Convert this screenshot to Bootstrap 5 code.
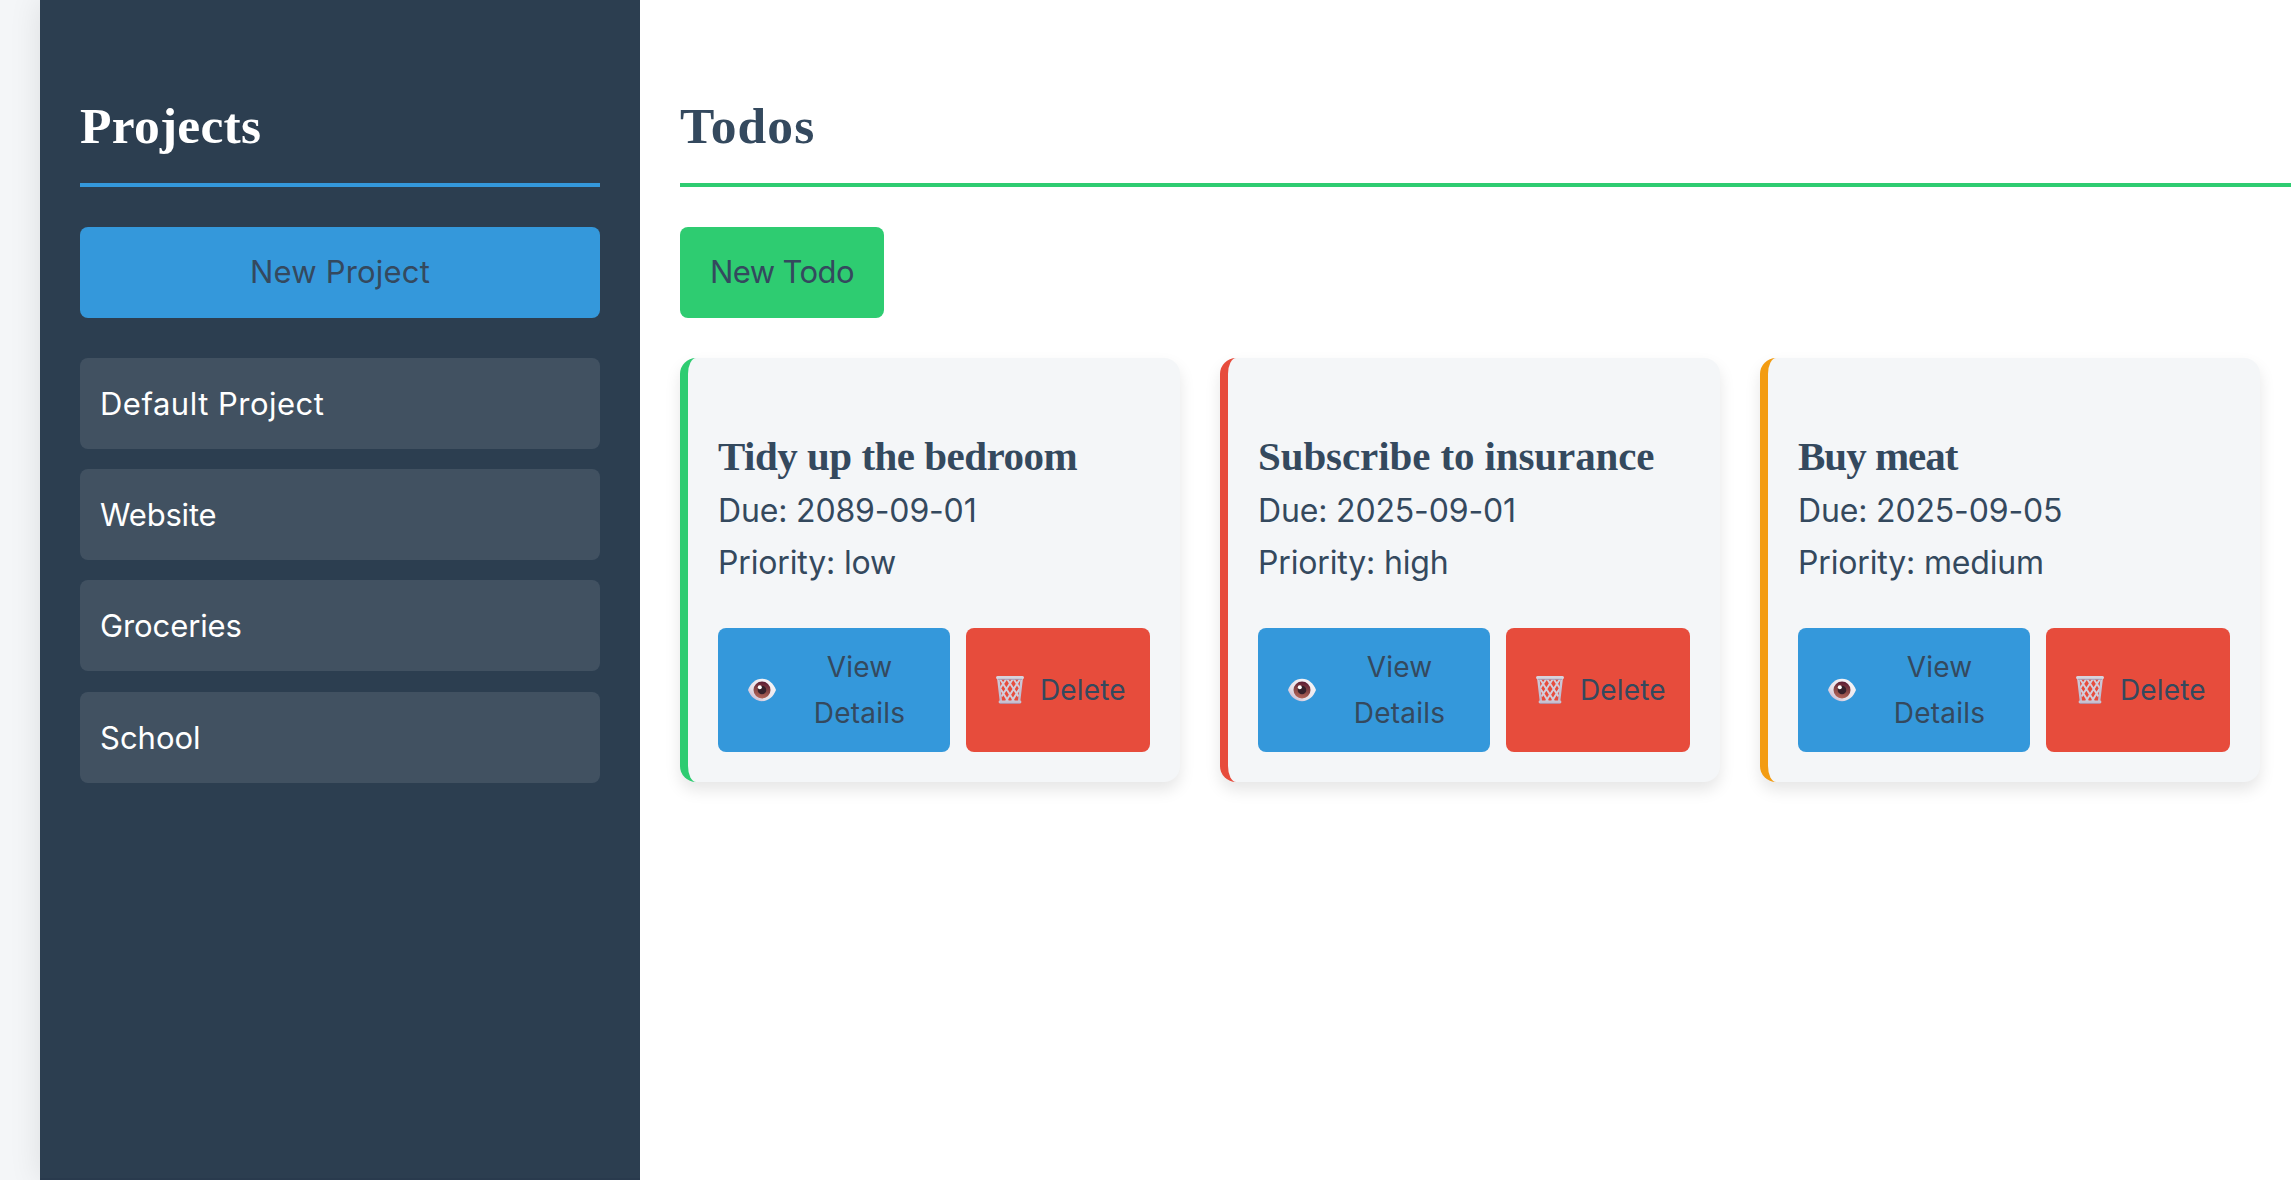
<!DOCTYPE html>
<html lang="en">
<head>
<meta charset="utf-8">
<meta name="viewport" content="width=device-width, initial-scale=1">
<title>Todos</title>
<link href="https://cdn.jsdelivr.net/npm/bootstrap@5.3.0/dist/css/bootstrap.min.css" rel="stylesheet">
<style>
  body { background: #f4f6f8; color: #34495e; font: 32px/51.2px Inter, "Open Sans", sans-serif; overflow: hidden; }
  .shell { margin-left: 40px; height: 1180px; background: #fff; box-shadow: 0 0 30px rgba(0,0,0,.1); }
  .sidebar { width: 600px; padding: 86px 40px 0; background: #2c3e50; border-bottom: 2px solid #293a4d; }
  .main-pane { padding: 86px 0 0 40px; min-width: 0; }
  .pane-title { font: bold 51.5px/79px "Liberation Serif", serif; padding-bottom: 18px; margin-bottom: 40px; border-bottom: 4px solid; }
  .sidebar .pane-title { color: #fff; border-color: #3498db; letter-spacing: .25px; }
  .main-pane .pane-title { border-color: #2ecc71; letter-spacing: 1.1px; }
  .flat-btn { font-size: 31px; line-height: 51px; padding: 19px 30px 21px; border: 0; border-radius: 8px; color: #34495e; margin-bottom: 40px; }
  .blue-btn { background: #3498db; }
  .green-btn { background: #2ecc71; width: 204px; letter-spacing: -.6px; white-space: nowrap; }
  .red-btn { background: #e74c3c; }
  .new-project { letter-spacing: .2px; }
  .project-item { font-size: 31px; line-height: 51px; padding: 20px; border-radius: 8px; background: rgba(255,255,255,.1); color: #fff; }
  .project-list { gap: 20.2px; }
  .sp-wide { letter-spacing: .5px; }
  .sp-tight { letter-spacing: -.2px; }
  .sp-flat { letter-spacing: -.1px; }
  .todo-grid { gap: 40px; }
  .todo-card { width: 500px; height: 424px; flex: none; padding: 30px; background: #f4f6f8; border-left: 8px solid; border-radius: 16px; box-shadow: 0 8px 16px rgba(0,0,0,.1); }
  .todo-card p { letter-spacing: -.16px; }
  .prio-low { border-color: #2ecc71; }
  .prio-high { border-color: #e74c3c; }
  .prio-medium { border-color: #f39c12; }
  .todo-title { font: bold 41px/41px "Liberation Serif", serif; margin: 47.7px 0 8.7px; white-space: nowrap; letter-spacing: -.1px; }
  .prio-low .todo-title { letter-spacing: -.5px; }
  .prio-medium .todo-title { letter-spacing: -1px; }
  .todo-actions { gap: 16px; margin-top: 40px; }
  .act-btn { height: 124px; font-size: 28px; line-height: 46px; border: 0; border-radius: 8px; color: #34495e; padding: 16px 29px; }
  .view-btn { width: 232px; }
  .view-btn span { margin-left: 21px; letter-spacing: .2px; }
  .del-btn { width: 184px; padding-right: 0; gap: 15px; }
  .del-btn span { letter-spacing: .15px; }
  .act-btn svg { width: 30px; height: 30px; flex: none; }
</style>
</head>
<body>
<svg class="position-absolute" width="0" height="0" xmlns="http://www.w3.org/2000/svg">
  <defs>
    <linearGradient id="gWhite" x1="0" y1="1" x2="1" y2="0"><stop offset="0" stop-color="#b9a2c8"/><stop offset=".35" stop-color="#e6e0e8"/><stop offset="1" stop-color="#fbfbfb"/></linearGradient>
    <linearGradient id="gIris" x1=".6" y1="0" x2=".4" y2="1"><stop offset="0" stop-color="#5c1a33"/><stop offset=".5" stop-color="#854545"/><stop offset="1" stop-color="#b5665a"/></linearGradient>
    <linearGradient id="gBin" gradientUnits="userSpaceOnUse" x1="0" y1="0" x2="0" y2="30"><stop offset="0" stop-color="#d2cedb"/><stop offset="1" stop-color="#bcb3c8"/></linearGradient>
  </defs>
</svg>
<div class="shell d-flex">
  <aside class="sidebar flex-shrink-0">
    <h2 class="pane-title">Projects</h2>
    <button class="flat-btn blue-btn new-project d-block w-100">New Project</button>
    <div class="project-list d-flex flex-column">
      <div class="project-item sp-wide">Default Project</div>
      <div class="project-item sp-tight">Website</div>
      <div class="project-item sp-flat">Groceries</div>
      <div class="project-item">School</div>
    </div>
  </aside>
  <main class="main-pane flex-grow-1">
    <h2 class="pane-title">Todos</h2>
    <button class="flat-btn green-btn d-block">New Todo</button>
    <div class="todo-grid d-flex" id="todos"></div>
  </main>
</div>
<script src="https://cdn.jsdelivr.net/npm/bootstrap@5.3.0/dist/js/bootstrap.bundle.min.js"></script>
<script>
  const eye = `<svg viewBox="0 0 30 30"><path d="M1 15C3.500 8.500 8.500 3.800 15 3.800S26.500 8.500 29 15C26.500 21.500 21.500 26.200 15 26.200S3.500 21.500 1 15z" fill="url(#gWhite)"/><circle cx="15" cy="15" r="8.500" fill="url(#gIris)"/><circle cx="15" cy="15" r="4.300" fill="#35202b"/><circle cx="12.800" cy="12.200" r="2" fill="#fff"/></svg>`;
  const bin = `<svg viewBox="0 0 30 30"><g fill="none" stroke="#d3cedb" stroke-width="2"><path d="M5 4l14 22M11.500 3l12 18.500M18 3l7 10.500M5 13l8 13M25 4L11 26M18.500 3L6.500 21.500M12 3L5 13.500M25 13l-8 13"/></g><path d="M3.300 3.500L6 27M26.700 3.500L24 27" stroke="url(#gBin)" stroke-width="2.400"/><path d="M2.500 2.500h25" stroke="#d6d3dd" stroke-width="3" stroke-linecap="round"/><path d="M3 4.300h24" stroke="#a79bb6" stroke-width="1"/><path d="M5 27h20" stroke="#c9c3d2" stroke-width="2.800" stroke-linecap="round"/><path d="M5 28.400h20" stroke="#a493b0" stroke-width=".8"/></svg>`;
  const todos = [
    ["Tidy up the bedroom", "2089-09-01", "low"],
    ["Subscribe to insurance", "2025-09-01", "high"],
    ["Buy meat", "2025-09-05", "medium"]
  ];
  document.getElementById("todos").innerHTML = todos.map(([title, due, prio]) => `
    <article class="todo-card prio-${prio}">
      <h3 class="todo-title">${title}</h3>
      <p class="m-0">Due: ${due}</p>
      <p class="m-0">Priority: ${prio}</p>
      <div class="todo-actions d-flex">
        <button class="act-btn blue-btn view-btn d-flex align-items-center">${eye}<span class="flex-grow-1 text-center">View<br>Details</span></button>
        <button class="act-btn red-btn del-btn d-flex align-items-center">${bin}<span>Delete</span></button>
      </div>
    </article>`).join("");
</script>
</body>
</html>
